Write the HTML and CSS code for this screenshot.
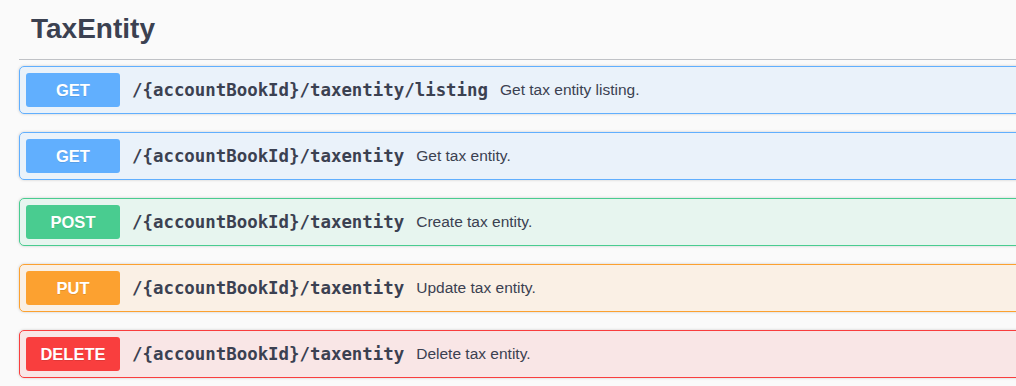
FILE: index.html
```html
<!DOCTYPE html>
<html lang="en">
<head>
  <meta charset="UTF-8" />
  <meta name="viewport" content="width=device-width, initial-scale=1.0"/>
  <title>TaxEntity</title>
  <link rel="stylesheet" href="styles.css">
</head>
<body>

  <div class="tag-section">
    <h4 class="tag-title">TaxEntity</h4>

    <div class="opblock opblock-get">
      <div class="opblock-summary">
        <span class="method">GET</span>
        <span class="path">/{accountBookId}/taxentity/listing</span>
        <span class="description">Get tax entity listing.</span>
      </div>
    </div>

    <div class="opblock opblock-get">
      <div class="opblock-summary">
        <span class="method">GET</span>
        <span class="path">/{accountBookId}/taxentity</span>
        <span class="description">Get tax entity.</span>
      </div>
    </div>

    <div class="opblock opblock-post">
      <div class="opblock-summary">
        <span class="method">POST</span>
        <span class="path">/{accountBookId}/taxentity</span>
        <span class="description">Create tax entity.</span>
      </div>
    </div>

    <div class="opblock opblock-put">
      <div class="opblock-summary">
        <span class="method">PUT</span>
        <span class="path">/{accountBookId}/taxentity</span>
        <span class="description">Update tax entity.</span>
      </div>
    </div>

    <div class="opblock opblock-delete">
      <div class="opblock-summary">
        <span class="method">DELETE</span>
        <span class="path">/{accountBookId}/taxentity</span>
        <span class="description">Delete tax entity.</span>
      </div>
    </div>
  </div>

</body>
</html>
```

FILE: styles.css
```css
body {
  background: #fafafa;
  font-family: 'Liberation Sans', Arial, sans-serif;
  color: #3b4151;
  margin: 0;
  overflow: hidden;
}

.tag-section {
  margin: 0 -60px 0 19px;
}

.tag-title {
  margin: 0 0 6px;
  padding: 11px 20px 13px 12px;
  font-size: 28px;
  line-height: 35px;
  font-weight: 700;
  color: #3b4151;
  border-bottom: 1px solid rgba(59, 65, 81, 0.3);
}

.opblock {
  margin: 0 0 18px;
  border: 1px solid #000;
  border-radius: 5px;
  box-shadow: 0 0 3px rgba(0, 0, 0, 0.19);
}

.opblock-summary {
  display: flex;
  align-items: center;
  padding: 6px;
}

.method {
  min-width: 94px;
  padding: 7px 0;
  font-size: 16.5px;
  line-height: 20px;
  font-weight: 700;
  text-align: center;
  color: #fff;
  border-radius: 3px;
  text-shadow: 0 1px 0 rgba(0, 0, 0, 0.1);
}

.path {
  padding: 0 12px;
  font-family: 'DejaVu Sans Mono', monospace;
  font-size: 17.4px;
  font-weight: 700;
  color: #3b4151;
}

.description {
  font-size: 15.5px;
  color: #3b4151;
}

.opblock-get {
  background: rgba(97, 175, 254, 0.1);
  border-color: #61affe;
}
.opblock-get .method {
  background: #61affe;
}

.opblock-post {
  background: rgba(73, 204, 144, 0.1);
  border-color: #49cc90;
}
.opblock-post .method {
  background: #49cc90;
}

.opblock-put {
  background: rgba(252, 161, 48, 0.1);
  border-color: #fca130;
}
.opblock-put .method {
  background: #fca130;
}

.opblock-delete {
  background: rgba(249, 62, 62, 0.1);
  border-color: #f93e3e;
}
.opblock-delete .method {
  background: #f93e3e;
}
```
